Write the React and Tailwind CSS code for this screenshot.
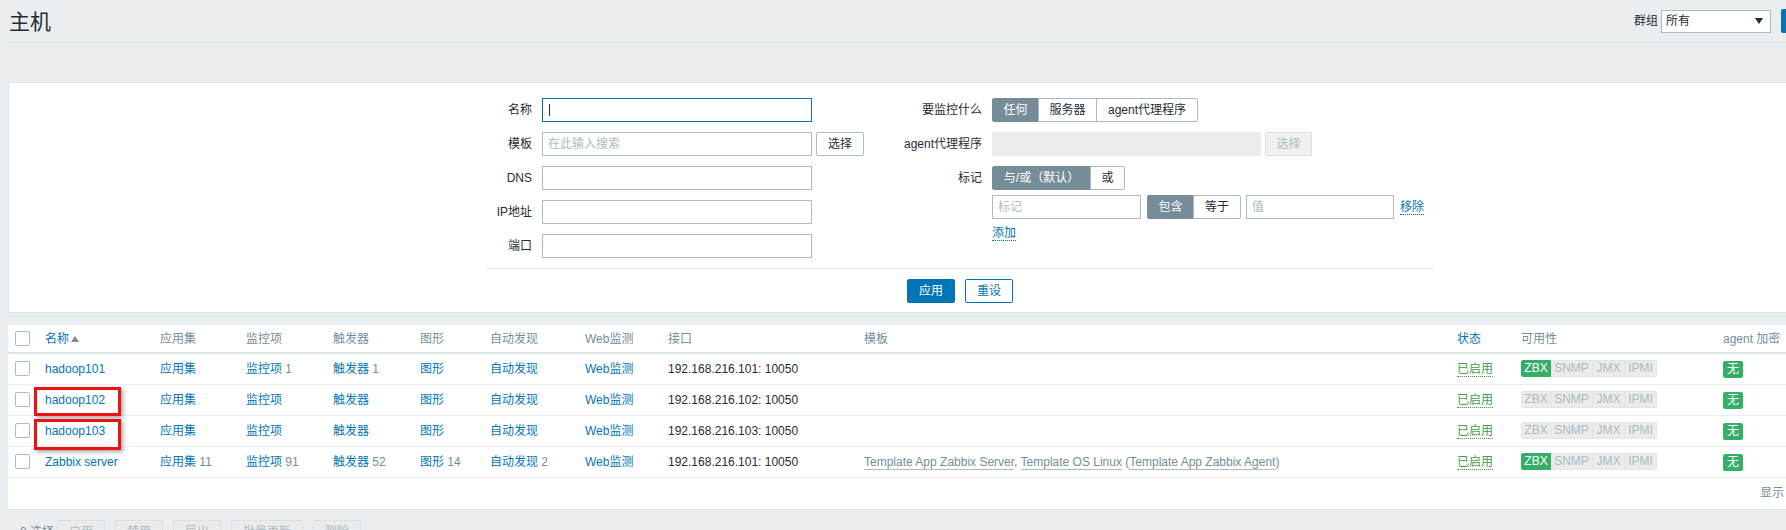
import React from 'react';

const rows = [
  { name: 'hadoop101', apps: '', items: '1', triggers: '1', graphs: '', disc: '', ip: '192.168.216.101: 10050', tpl: false, zbx: true },
  { name: 'hadoop102', apps: '', items: '', triggers: '', graphs: '', disc: '', ip: '192.168.216.102: 10050', tpl: false, zbx: false },
  { name: 'hadoop103', apps: '', items: '', triggers: '', graphs: '', disc: '', ip: '192.168.216.103: 10050', tpl: false, zbx: false },
  { name: 'Zabbix server', apps: '11', items: '91', triggers: '52', graphs: '14', disc: '2', ip: '192.168.216.101: 10050', tpl: true, zbx: true },
];

function Checkbox() {
  return <div className="w-[15px] h-[15px] bg-white border border-[#acbbc2] rounded-[2px]" />;
}

function Seg({ items }) {
  return (
    <div className="flex">
      {items.map((it, i) => (
        <div
          key={it.label}
          className={`${it.w} h-[24px] flex items-center justify-center border ${i > 0 ? '-ml-px' : ''} ${
            i === 0 ? 'rounded-l-[2px]' : ''
          } ${i === items.length - 1 ? 'rounded-r-[2px]' : ''} ${
            it.on ? 'bg-[#768d99] border-[#768d99] text-white' : 'bg-white border-[#acbbc2] text-[#1f2c33]'
          }`}
        >
          {it.label}
        </div>
      ))}
    </div>
  );
}

function LinkCount({ label, count }) {
  return (
    <span>
      <span className="text-[#0275b8]">{label}</span>
      {count && <span className="text-[#768d99]"> {count}</span>}
    </span>
  );
}

function Avail({ zbx }) {
  const grey = 'bg-[#ebebeb] border-[#dfe4e7] text-[#acbbc2]';
  return (
    <div className="flex h-[17px] text-[12px] leading-[15px]">
      <span className={`w-[30px] text-center border rounded-l-[2px] ${zbx ? 'bg-[#34af67] border-[#34af67] text-white' : grey}`}>ZBX</span>
      <span className={`w-[42px] text-center border border-l-0 ${grey}`}>SNMP</span>
      <span className={`w-[32px] text-center border border-l-0 ${grey}`}>JMX</span>
      <span className={`w-[32px] text-center border border-l-0 rounded-r-[2px] ${grey}`}>IPMI</span>
    </div>
  );
}

export default function App() {
  return (
    <div className="w-full h-[530px] overflow-hidden bg-[#ebeef0] text-[12px] text-[#1f2c33] font-['Liberation_Sans','Noto_Sans_CJK_SC',sans-serif]">
      <div className="relative w-[1920px] px-[8px]">
        {/* Header */}
        <div className="h-[43px] border-b border-[#dfe4e7] flex items-center justify-between">
          <h1 className="text-[21px] leading-none text-[#1f2c33] ml-px">主机</h1>
          <div className="flex items-center">
            <span className="mr-[3px]">群组</span>
            <div className="w-[110px] h-[23px] bg-white border border-[#acbbc2] flex items-center justify-between pl-[4px] pr-[7px]">
              <span>所有</span>
              <svg width="8" height="6" viewBox="0 0 8 6">
                <polygon points="0,0 8,0 4,6" fill="#1f2c33" />
              </svg>
            </div>
            <button className="ml-[10px] w-[76px] h-[24px] bg-[#0275b8] text-white rounded-[2px]">创建主机</button>
            <button className="ml-[10px] w-[45px] h-[24px] bg-white border border-[#0275b8] text-[#0275b8] rounded-[2px]">导入</button>
          </div>
        </div>

        {/* Filter */}
        <div className="mt-[39px] bg-white border border-[#dfe4e7] pt-[15px] pb-[9px]">
          <div className="w-[948px] mx-auto">
            <div className="flex items-start">
              {/* left column */}
              <div className="w-[394px] flex flex-col gap-[10px]">
                <div className="flex items-center h-[24px]">
                  <span className="w-[46px] text-right">名称</span>
                  <div className="ml-[10px] w-[270px] h-[24px] border border-[#0275b8] flex items-center pl-[6px]">
                    <div className="w-px h-[12px] bg-[#1f2c33]" />
                  </div>
                </div>
                <div className="flex items-center h-[24px]">
                  <span className="w-[46px] text-right">模板</span>
                  <div className="ml-[10px] w-[270px] h-[24px] border border-[#acbbc2] flex items-center px-[5px] text-[#acbbc2]">在此输入搜索</div>
                  <button className="ml-[4px] w-[48px] h-[24px] bg-white border border-[#acbbc2] rounded-[2px] text-[#1f2c33]">选择</button>
                </div>
                <div className="flex items-center h-[24px]">
                  <span className="w-[46px] text-right">DNS</span>
                  <div className="ml-[10px] w-[270px] h-[24px] border border-[#acbbc2]" />
                </div>
                <div className="flex items-center h-[24px]">
                  <span className="w-[46px] text-right">IP地址</span>
                  <div className="ml-[10px] w-[270px] h-[24px] border border-[#acbbc2]" />
                </div>
                <div className="flex items-center h-[24px]">
                  <span className="w-[46px] text-right">端口</span>
                  <div className="ml-[10px] w-[270px] h-[24px] border border-[#acbbc2]" />
                </div>
              </div>

              {/* right column */}
              <div className="flex-1 flex flex-col">
                <div className="flex items-center h-[24px]">
                  <span className="w-[102px] text-right">要监控什么</span>
                  <div className="ml-[10px]">
                    <Seg
                      items={[
                        { label: '任何', w: 'w-[47px]', on: true },
                        { label: '服务器', w: 'w-[59px]' },
                        { label: 'agent代理程序', w: 'w-[102px]' },
                      ]}
                    />
                  </div>
                </div>
                <div className="flex items-center h-[24px] mt-[10px]">
                  <span className="w-[102px] text-right">agent代理程序</span>
                  <div className="ml-[10px] w-[269px] h-[24px] bg-[#ebebeb] border border-[#ebebeb]" />
                  <button className="ml-[4px] w-[47px] h-[24px] bg-[#f0f0f0] border border-[#dcdfe1] rounded-[2px] text-[#acbbc2]">选择</button>
                </div>
                <div className="flex items-center h-[24px] mt-[10px]">
                  <span className="w-[102px] text-right">标记</span>
                  <div className="ml-[10px]">
                    <Seg
                      items={[
                        { label: '与/或（默认）', w: 'w-[99px]', on: true },
                        { label: '或', w: 'w-[35px]' },
                      ]}
                    />
                  </div>
                </div>
                <div className="flex items-center h-[24px] mt-[5px] pl-[112px]">
                  <div className="w-[149px] h-[24px] border border-[#acbbc2] flex items-center px-[5px] text-[#acbbc2]">标记</div>
                  <div className="ml-[6px]">
                    <Seg
                      items={[
                        { label: '包含', w: 'w-[47px]', on: true },
                        { label: '等于', w: 'w-[48px]' },
                      ]}
                    />
                  </div>
                  <div className="ml-[5px] w-[148px] h-[24px] border border-[#acbbc2] flex items-center px-[5px] text-[#acbbc2]">值</div>
                  <span className="ml-[6px] text-[#0275b8] border-b border-dotted border-[#0275b8] leading-[14px]">移除</span>
                </div>
                <div className="mt-[7px] pl-[112px] flex">
                  <span className="text-[#0275b8] border-b border-dotted border-[#0275b8] leading-[14px]">添加</span>
                </div>
              </div>
            </div>

            <div className="mt-[10px] border-t border-[#ebeef0]" />

            <div className="mt-[10px] flex justify-center gap-[10px]">
              <button className="w-[48px] h-[24px] bg-[#0275b8] border border-[#0275b8] text-white rounded-[2px]">应用</button>
              <button className="w-[48px] h-[24px] bg-white border border-[#0275b8] text-[#0275b8] rounded-[2px]">重设</button>
            </div>
          </div>
        </div>

        {/* Table */}
        <div className="mt-[12px] bg-white border-b border-[#dfe4e7]">
          <table className="w-[1904px] table-fixed border-collapse">
            <colgroup>
              <col className="w-[32px]" />
              <col className="w-[115px]" />
              <col className="w-[86px]" />
              <col className="w-[87px]" />
              <col className="w-[87px]" />
              <col className="w-[70px]" />
              <col className="w-[95px]" />
              <col className="w-[83px]" />
              <col className="w-[196px]" />
              <col className="w-[593px]" />
              <col className="w-[64px]" />
              <col className="w-[202px]" />
              <col className="w-[112px]" />
              <col className="w-[82px]" />
            </colgroup>
            <thead>
              <tr className="h-[28px] border-b-2 border-[#dfe4e7] text-left text-[#768d99]">
                <th className="pl-[7px] font-normal"><Checkbox /></th>
                <th className="pl-[5px] font-normal">
                  <span className="inline-flex items-center text-[#0275b8]">
                    名称
                    <svg className="ml-[2px]" width="8" height="6" viewBox="0 0 8 6">
                      <polygon points="0,6 8,6 4,0" fill="#768d99" />
                    </svg>
                  </span>
                </th>
                <th className="pl-[5px] font-normal">应用集</th>
                <th className="pl-[5px] font-normal">监控项</th>
                <th className="pl-[5px] font-normal">触发器</th>
                <th className="pl-[5px] font-normal">图形</th>
                <th className="pl-[5px] font-normal">自动发现</th>
                <th className="pl-[5px] font-normal">Web监测</th>
                <th className="pl-[5px] font-normal">接口</th>
                <th className="pl-[5px] font-normal">模板</th>
                <th className="pl-[5px] font-normal text-[#0275b8]">状态</th>
                <th className="pl-[5px] font-normal">可用性</th>
                <th className="pl-[5px] font-normal">agent 加密</th>
                <th className="pl-[5px] font-normal">信息</th>
              </tr>
            </thead>
            <tbody>
              {rows.map((r) => (
                <tr key={r.ip + r.name} className="h-[31px] border-b border-[#ebeef0]">
                  <td className="pl-[7px]"><Checkbox /></td>
                  <td className="pl-[5px] text-[#0275b8]">{r.name}</td>
                  <td className="pl-[5px]"><LinkCount label="应用集" count={r.apps} /></td>
                  <td className="pl-[5px]"><LinkCount label="监控项" count={r.items} /></td>
                  <td className="pl-[5px]"><LinkCount label="触发器" count={r.triggers} /></td>
                  <td className="pl-[5px]"><LinkCount label="图形" count={r.graphs} /></td>
                  <td className="pl-[5px]"><LinkCount label="自动发现" count={r.disc} /></td>
                  <td className="pl-[5px] text-[#0275b8]">Web监测</td>
                  <td className="pl-[5px]">{r.ip}</td>
                  <td className="pl-[5px] whitespace-nowrap text-[#768d99]">
                    {r.tpl && (
                      <>
                        <span className="border-b border-[#acbbc2]">Template App Zabbix Server</span>,{' '}
                        <span className="border-b border-[#acbbc2]">Template OS Linux</span> (
                        <span className="border-b border-[#acbbc2]">Template App Zabbix Agent</span>)
                      </>
                    )}
                  </td>
                  <td className="pl-[5px]">
                    <span className="text-[#429e47] border-b border-dotted border-[#429e47]">已启用</span>
                  </td>
                  <td className="pl-[5px]"><Avail zbx={r.zbx} /></td>
                  <td className="pl-[5px]">
                    <span className="inline-block w-[20px] h-[17px] leading-[17px] text-center bg-[#34af67] text-white rounded-[2px]">无</span>
                  </td>
                  <td />
                </tr>
              ))}
              <tr className="h-[32px]">
                <td colSpan={14} className="text-right pr-[12px] text-[#768d99]">显示 已自动发现的 4中的4</td>
              </tr>
            </tbody>
          </table>
        </div>

        {/* Action bar */}
        <div className="mt-[10px] flex items-start">
          <span className="w-[49px] pl-[12px] leading-[24px] text-[#768d99]">0 选择</span>
          <div className="flex gap-[10px]">
            <button className="w-[48px] h-[24px] bg-[#ebebeb] border border-[#dcdfe1] rounded-[2px] text-[#acbbc2]">启用</button>
            <button className="w-[48px] h-[24px] bg-[#ebebeb] border border-[#dcdfe1] rounded-[2px] text-[#acbbc2]">禁用</button>
            <button className="w-[48px] h-[24px] bg-[#ebebeb] border border-[#dcdfe1] rounded-[2px] text-[#acbbc2]">导出</button>
            <button className="w-[72px] h-[24px] bg-[#ebebeb] border border-[#dcdfe1] rounded-[2px] text-[#acbbc2]">批量更新</button>
            <button className="w-[48px] h-[24px] bg-[#ebebeb] border border-[#dcdfe1] rounded-[2px] text-[#acbbc2]">删除</button>
          </div>
        </div>

        {/* annotation boxes */}
        <div className="absolute left-[34px] top-[387px] w-[87px] h-[29px] border-[3px] border-[#ee1111] shadow-[2px_2px_4px_rgba(0,0,0,0.35)]" />
        <div className="absolute left-[34px] top-[419px] w-[87px] h-[31px] border-[3px] border-[#ee1111] shadow-[2px_2px_4px_rgba(0,0,0,0.35)]" />
      </div>
    </div>
  );
}
